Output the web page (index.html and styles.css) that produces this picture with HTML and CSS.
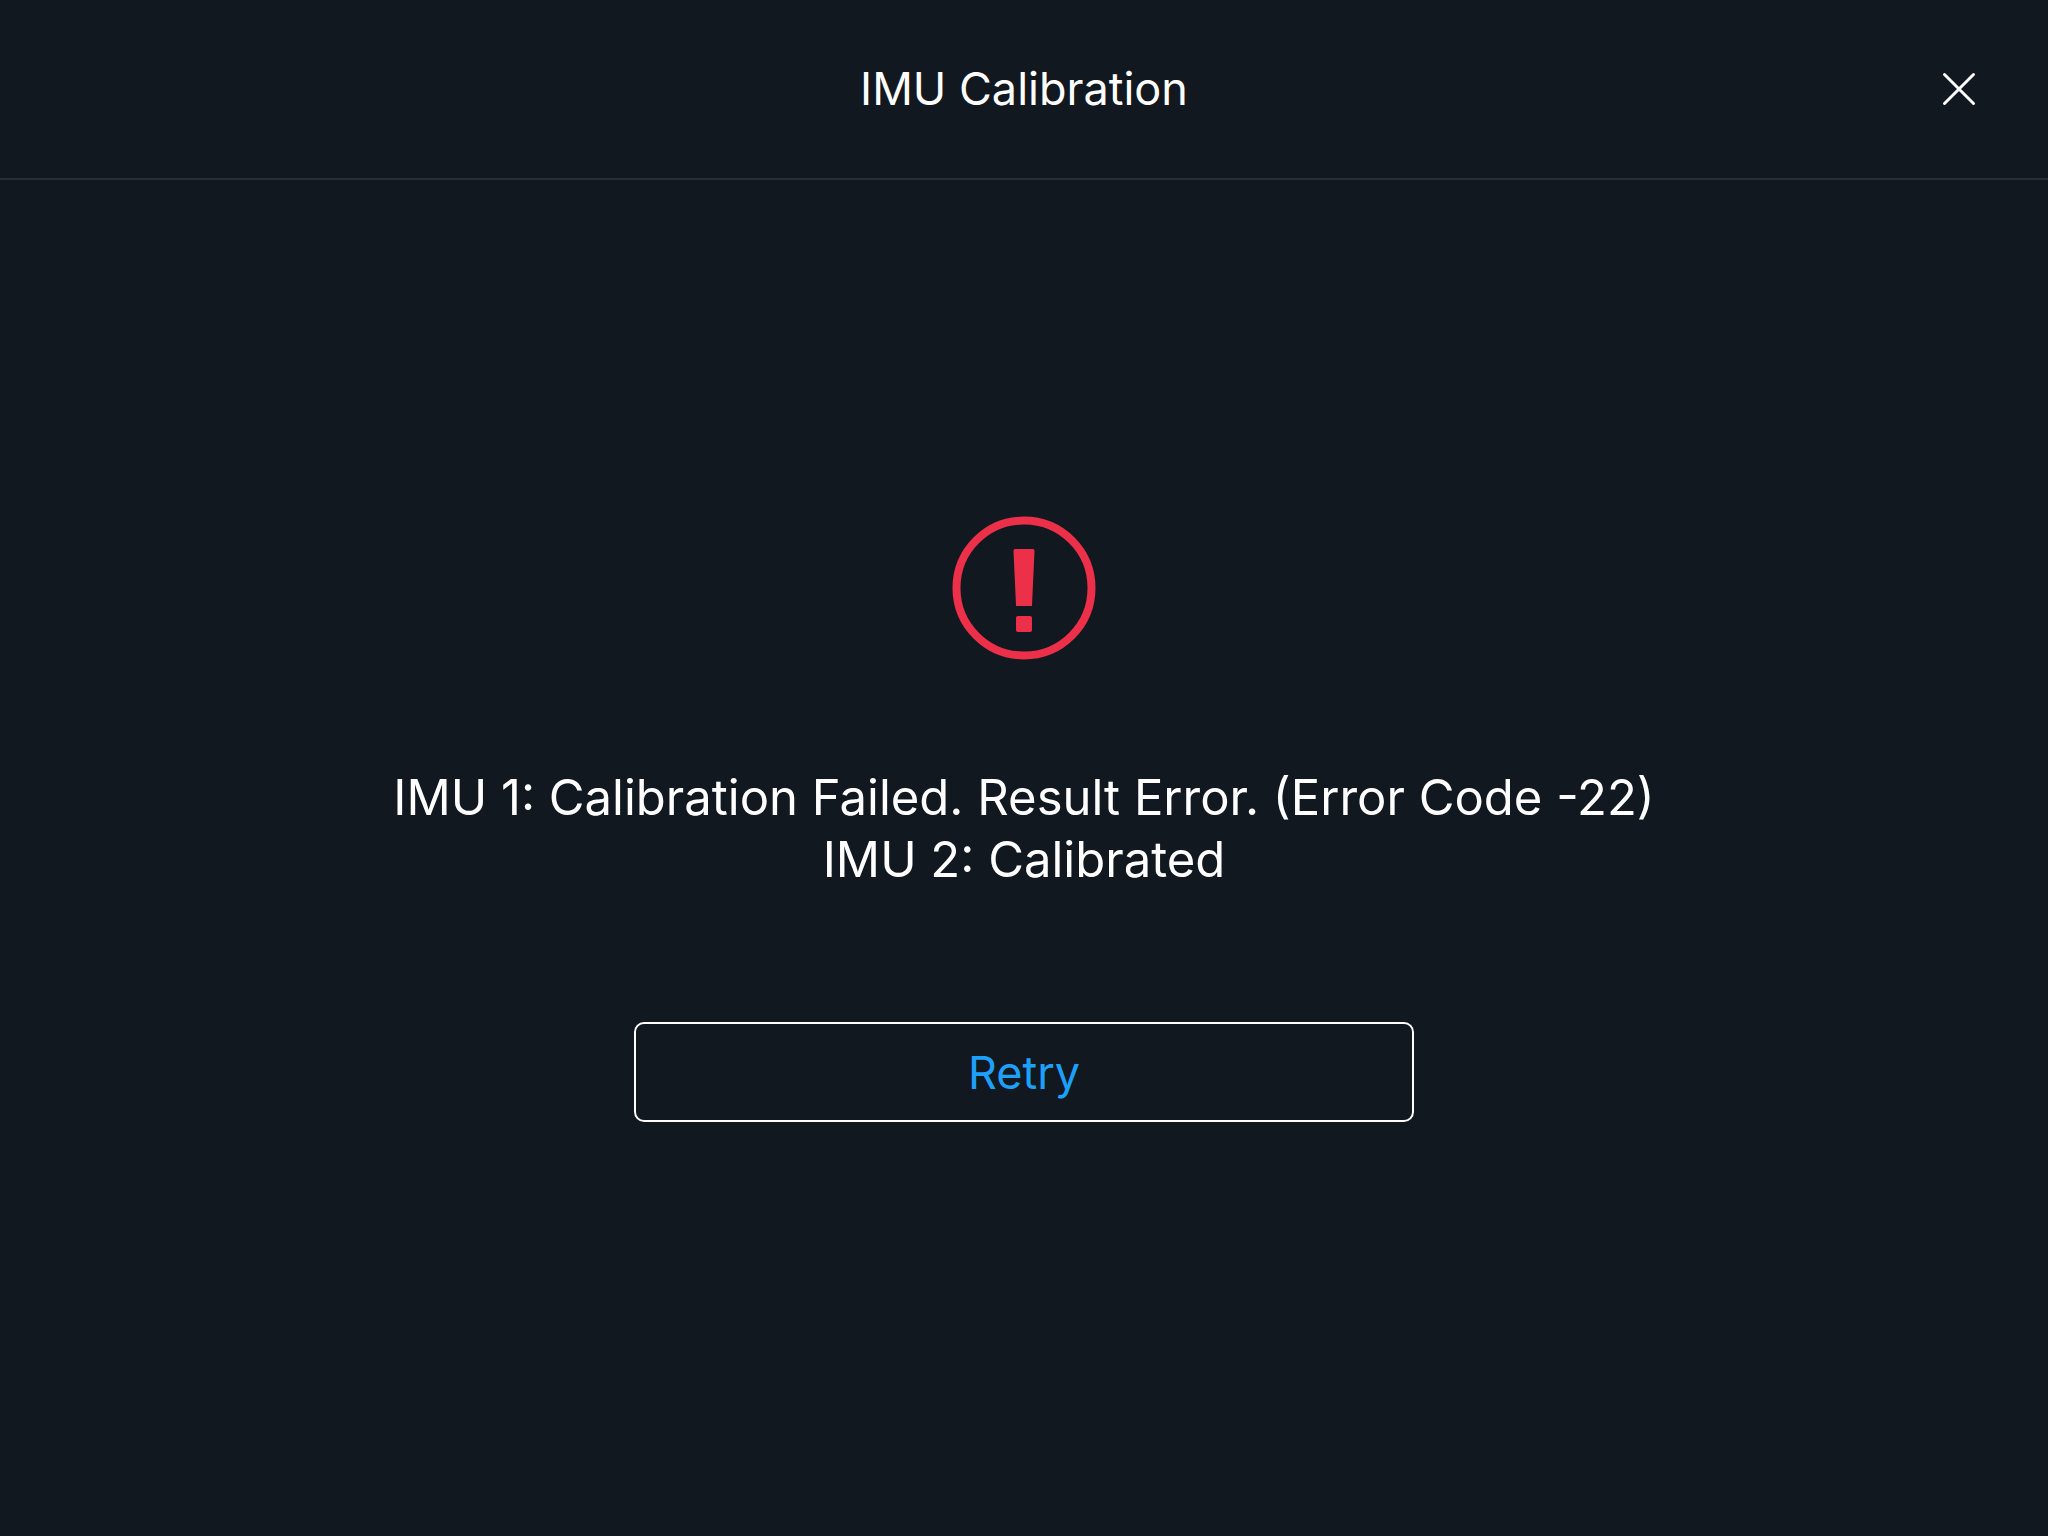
FILE: index.html
```
<!DOCTYPE html>
<html lang="en">
	<head>
		<meta charset="UTF-8">
		<meta name="viewport" content="width=device-width, initial-scale=1">
		<title>IMU Calibration</title>
		<link rel="stylesheet" href="styles.css">
	</head>
	<body>
		<header class="header">
			<h1 class="title">IMU Calibration</h1>
			<button class="close" type="button" aria-label="Close">
				<svg width="34" height="34" viewBox="0 0 34 34">
					<path d="M2.5 2.5L31.5 31.5M31.5 2.5L2.5 31.5"/>
				</svg>
			</button>
		</header>
		<main class="content">
			<svg class="warn" width="144" height="144" viewBox="0 0 144 144">
				<circle cx="72" cy="72" r="67.5"/>
				<path d="M63 33H81Q82.5 33 82.5 35L80 89.5Q80 90 79.5 90H64.5Q64 90 64 89.5L61.5 35Q61.5 33 63 33Z"/>
				<rect x="64" y="100" width="16" height="16" rx="2"/>
			</svg>
			<div class="result" role="alert">
				<p>IMU 1: Calibration Failed. Result Error. (Error Code -22)</p>
				<p>IMU 2: Calibrated</p>
			</div>
			<button class="retry" type="button">Retry</button>
		</main>
	</body>
</html>
```
FILE: styles.css
```
*{margin: 0;padding: 0;box-sizing: border-box;}
body{
	min-height: 100vh;
	background: #111820;
	color: #fff;
	font-family: Inter, "Liberation Sans", sans-serif;
}
button{
	font-family: inherit;
	background: none;
	border: none;
	cursor: pointer;
}
.header{
	display: grid;
	grid-template-columns: 1fr auto 1fr;
	align-items: center;
	height: 180px;
	padding: 0 64px;
	border-bottom: 2px solid #272e36;
}
.title{
	grid-column: 2;
	font-size: 45px;
	font-weight: 400;
	line-height: 60px;
}
.close{
	justify-self: end;
	padding: 8px;
}
.close svg{
	display: block;
	stroke: #fff;
	stroke-width: 3;
	stroke-linecap: round;
}
.content{
	display: flex;
	flex-direction: column;
	align-items: center;
	padding: 336px 32px 64px;
}
.warn{
	fill: #ec3049;
}
.warn circle{
	fill: none;
	stroke: #ec3049;
	stroke-width: 8;
}
.result{
	margin: 107px 0 131px;
	font-size: 49px;
	line-height: 62px;
	text-align: center;
}
.retry{
	width: 100%;
	max-width: 780px;
	height: 100px;
	border: 2px solid #fff;
	border-radius: 10px;
	color: #1da0f8;
	font-size: 45px;
}
```
